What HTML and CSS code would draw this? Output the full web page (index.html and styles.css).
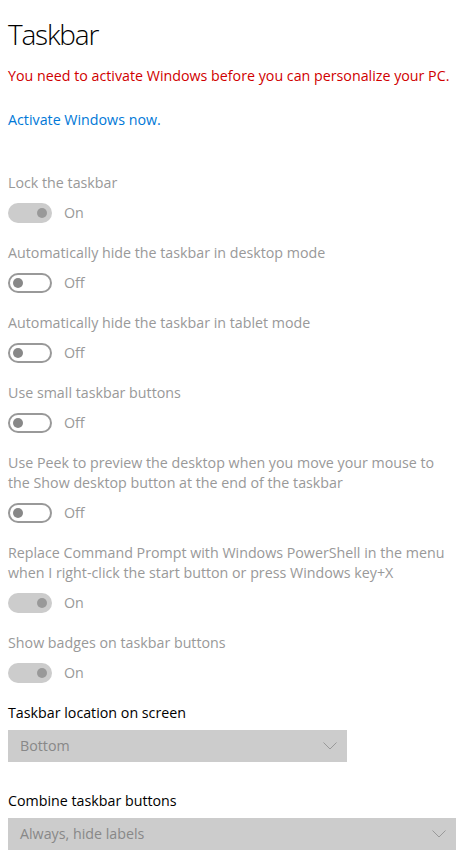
FILE: index.html
```html
<!DOCTYPE html>
<html>
<head>
<meta charset="utf-8">
<link rel="stylesheet" href="styles.css">
</head>
<body>
<main class="page">
  <h1 class="title">Taskbar</h1>
  <p class="warning">You need to activate Windows before you can personalize your PC.</p>
  <a class="link" href="#">Activate Windows now.</a>

  <section class="settings">
    <div class="setting">
      <div class="label">Lock the taskbar</div>
      <div class="toggle-row"><span class="toggle on"><span class="knob"></span></span><span class="state">On</span></div>
    </div>
    <div class="setting">
      <div class="label">Automatically hide the taskbar in desktop mode</div>
      <div class="toggle-row"><span class="toggle off"><span class="knob"></span></span><span class="state">Off</span></div>
    </div>
    <div class="setting">
      <div class="label">Automatically hide the taskbar in tablet mode</div>
      <div class="toggle-row"><span class="toggle off"><span class="knob"></span></span><span class="state">Off</span></div>
    </div>
    <div class="setting">
      <div class="label">Use small taskbar buttons</div>
      <div class="toggle-row"><span class="toggle off"><span class="knob"></span></span><span class="state">Off</span></div>
    </div>
    <div class="setting">
      <div class="label">Use Peek to preview the desktop when you move your mouse to<br>the Show desktop button at the end of the taskbar</div>
      <div class="toggle-row"><span class="toggle off"><span class="knob"></span></span><span class="state">Off</span></div>
    </div>
    <div class="setting">
      <div class="label">Replace Command Prompt with Windows PowerShell in the menu<br>when I right-click the start button or press Windows key+X</div>
      <div class="toggle-row"><span class="toggle on"><span class="knob"></span></span><span class="state">On</span></div>
    </div>
    <div class="setting">
      <div class="label">Show badges on taskbar buttons</div>
      <div class="toggle-row"><span class="toggle on"><span class="knob"></span></span><span class="state">On</span></div>
    </div>
  </section>

  <div class="select-group">
    <div class="select-label">Taskbar location on screen</div>
    <div class="select narrow"><span>Bottom</span>
      <svg class="chev" width="14" height="8" viewBox="0 0 14 8"><path d="M0.5 0.5 L7 7 L13.5 0.5" fill="none" stroke="#999" stroke-width="1"/></svg>
    </div>
  </div>
  <div class="select-group">
    <div class="select-label">Combine taskbar buttons</div>
    <div class="select wide"><span>Always, hide labels</span>
      <svg class="chev" width="14" height="8" viewBox="0 0 14 8"><path d="M0.5 0.5 L7 7 L13.5 0.5" fill="none" stroke="#999" stroke-width="1"/></svg>
    </div>
  </div>
</main>
</body>
</html>
```

FILE: styles.css
```css
* { box-sizing: border-box; }
html, body { margin: 0; padding: 0; background: #fff; }
body {
  font-family: "Open Sans", "Noto Sans", sans-serif;
  font-size: 14.25px;
  line-height: 20px;
  color: #000;
}
.page { padding: 14px 8px 0 8px; }
.title {
  margin: 0;
  font-size: 28px;
  font-weight: 300;
  letter-spacing: -1.2px;
  line-height: 40px;
  color: #000;
}
.warning {
  margin: 12px 0 0 0;
  color: #d00000;
}
.link {
  display: block;
  margin-top: 24px;
  color: #0078d7;
  text-decoration: none;
}
.settings { margin-top: 43px; display: flex; flex-direction: column; gap: 20px; }
.setting { display: flex; flex-direction: column; gap: 10px; }
.label { color: #999; }
.toggle-row { display: flex; align-items: center; gap: 12px; height: 20px; }
.toggle {
  width: 44px; height: 20px; border-radius: 10px;
  display: flex; align-items: center; padding: 0 5px;
}
.toggle .knob { width: 10px; height: 10px; border-radius: 50%; background: #999; }
.toggle.on { background: #ccc; justify-content: flex-end; }
.toggle.off { border: 2px solid #999; justify-content: flex-start; padding: 0 3px; }
.toggle.off .knob { background: #888; }
.state { color: #999; }
.select-group { margin-top: 20px; display: flex; flex-direction: column; gap: 7px; }
.select-group + .select-group { margin-top: 29px; }
.select-label { color: #000; }
.select {
  height: 32px; background: #ccc; color: #888;
  display: flex; align-items: center; justify-content: space-between;
  padding: 0 10px 0 12px;
}
.select.narrow { width: 339px; }
.select.wide { width: 448px; }
.chev { display: block; }
```
